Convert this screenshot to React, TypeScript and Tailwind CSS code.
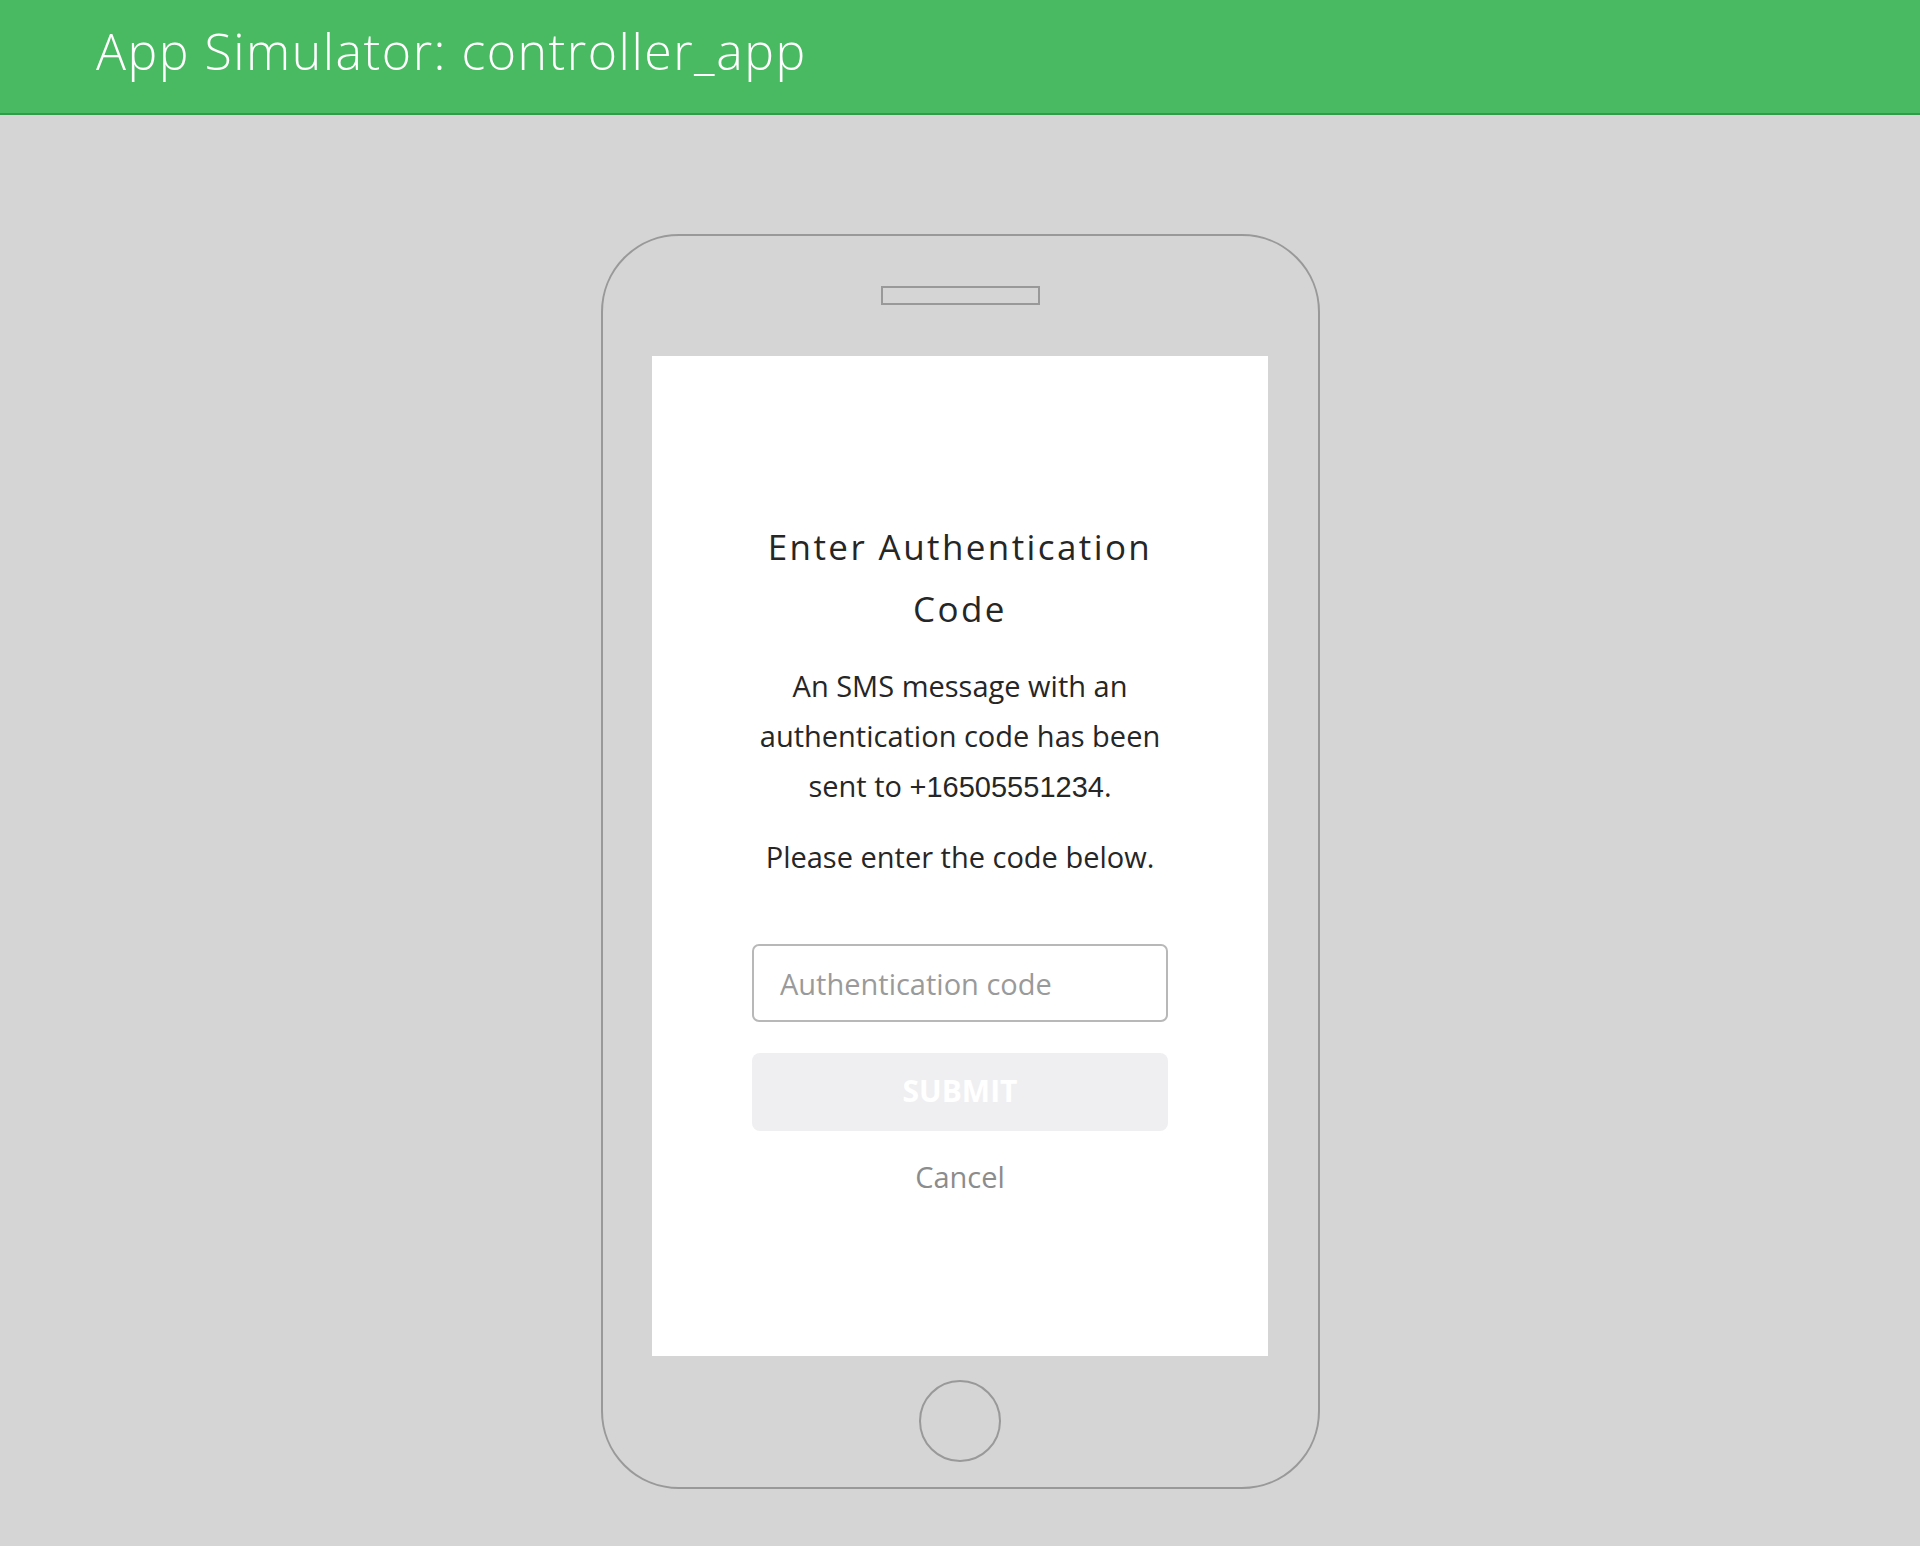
import { useState } from 'react';

function Header() {
  return (
    <header className="h-[115px] bg-[#4aba62] border-b-2 border-[#2f9c47]">
      <h1 className="pl-[96px] pt-[26px] text-[50px] leading-[50px] font-light tracking-[1.5px] text-white font-['Open_Sans',sans-serif]">
        App Simulator: controller_app
      </h1>
    </header>
  );
}

function AuthScreen() {
  const [code, setCode] = useState('');

  return (
    <div className="w-[616px] h-[1000px] bg-white flex flex-col items-center text-center font-['Open_Sans',sans-serif] text-[#262626]">
      <h2 className="mt-[160px] w-[420px] text-[35px] leading-[62px] tracking-[2.4px]">
        Enter Authentication Code
      </h2>
      <p className="mt-[21px] w-[420px] text-[29px] leading-[50px]">
        An SMS message with an authentication code has been sent to{' '}
        <span className="font-['Liberation_Sans',Arial,sans-serif]">+16505551234</span>.
      </p>
      <p className="mt-[20px] text-[29px] leading-[50px]">Please enter the code below.</p>

      <input
        value={code}
        onChange={e => setCode(e.target.value)}
        placeholder="Authentication code"
        className="mt-[62px] w-[416px] h-[78px] px-[26px] rounded-[7px] border-2 border-[#b8b8b8] text-[29px] text-[#333] placeholder:text-[#9a9a9a] outline-none"
      />
      <button
        disabled={code.length === 0}
        className="mt-[31px] w-[416px] h-[78px] pb-[3px] rounded-[8px] bg-[#efeff1] text-white text-[30px] font-bold"
      >
        SUBMIT
      </button>
      <button className="mt-[21px] text-[29px] leading-[50px] text-[#8c8c8c]">Cancel</button>
    </div>
  );
}

export default function App() {
  return (
    <div className="min-h-[1546px] bg-[#d5d5d5]">
      <Header />
      <div className="flex justify-center pt-[119px]">
        {/* phone frame */}
        <div className="w-[719px] h-[1255px] border-2 border-[#999] rounded-[78px] flex flex-col items-center">
          <div className="mt-[50px] w-[159px] h-[19px] border-2 border-[#999]" />
          <div className="mt-[51px]">
            <AuthScreen />
          </div>
          <div className="mt-[24px] w-[82px] h-[82px] rounded-full border-2 border-[#999]" />
        </div>
      </div>
    </div>
  );
}
